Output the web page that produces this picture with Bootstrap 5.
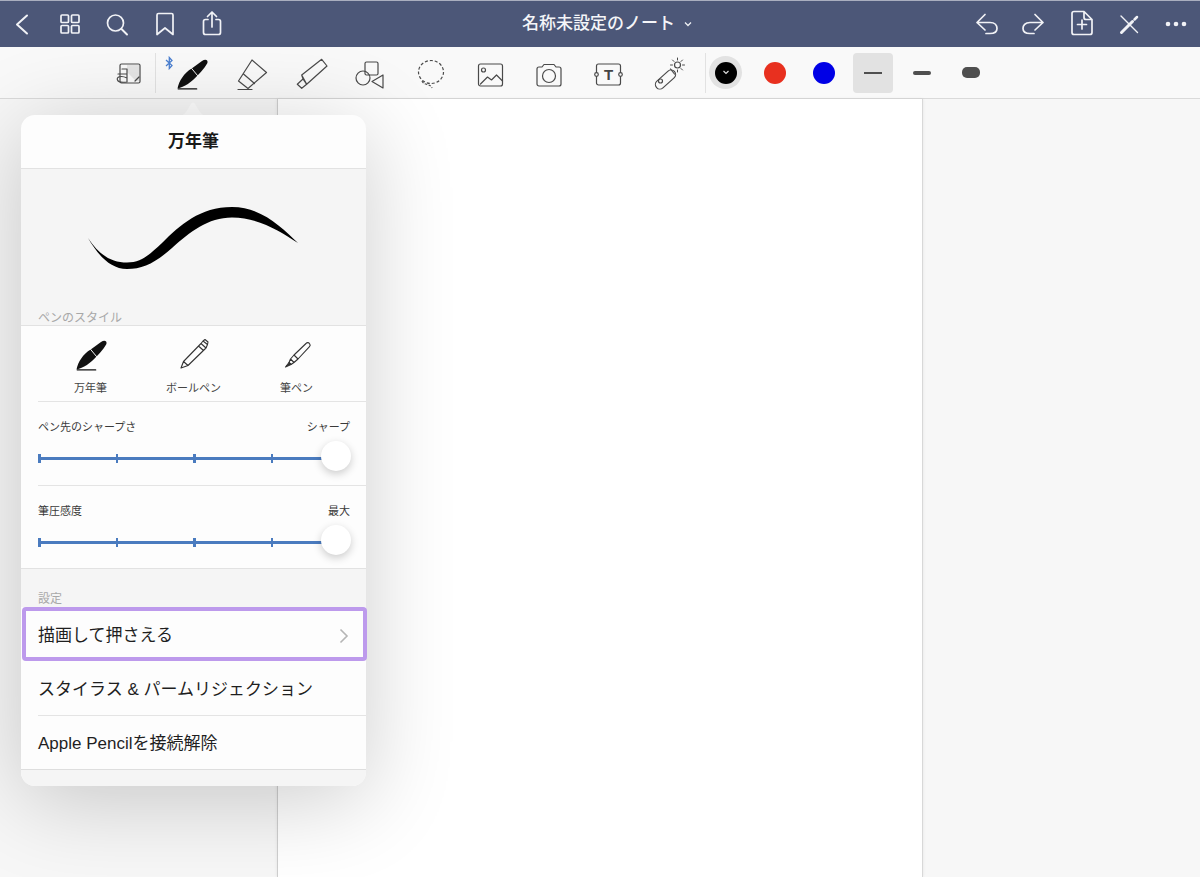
<!DOCTYPE html>
<html lang="ja">
<head>
  <meta charset="UTF-8">
  <meta name="viewport" content="width=device-width, initial-scale=1.0">
  <title>名称未設定のノート</title>
  <link rel="stylesheet" href="https://cdn.jsdelivr.net/npm/bootstrap@5.3.2/dist/css/bootstrap.min.css">
<style>
html, body {
  height: 877px;
  overflow: hidden;
}

body {
  font-family: "Liberation Sans", "Noto Sans CJK JP", sans-serif;
  color: #222;
  background: #f7f7f7;
}

svg {
  display: block;
  flex: none;
}

.topBar {
  height: 47px;
  background: #4c5778;
  border-top: 1px solid #a9aebf;
  color: #f4f5f8;
}

.barSide {
  flex: 1 1 0;
  gap: 15.5px;
}

.barSide.left {
  padding-left: 6px;
}

.barSide.right {
  padding-right: 8px;
}

.barSide svg {
  width: 32px;
  height: 32px;
  fill: none;
  stroke: #f1f2f6;
  stroke-width: 1.7;
  stroke-linecap: round;
  stroke-linejoin: round;
}

.noteTitle {
  font-size: 17px;
  font-weight: 500;
  margin-left: 17px;
  gap: 8px;
  white-space: nowrap;
}

.toolBar {
  height: 52px;
  background: #f9f9f9;
  border-bottom: 1px solid #dadada;
  padding-left: 108px;
}

.toolIcon {
  width: 40px;
  height: 40px;
  fill: none;
  stroke: #4a4a4a;
  stroke-width: 1.2;
  stroke-linecap: round;
  stroke-linejoin: round;
}

.toolCell {
  width: 59.55px;
  flex: none;
}

.toolDivider {
  width: 1px;
  height: 40px;
  background: #e2e2e2;
  flex: none;
  margin-left: 7px;
}

.toolDivider.first {
  margin-right: 6px;
}

.swatchCell {
  width: 40px;
  height: 40px;
  flex: none;
}

.swatch {
  width: 22px;
  height: 22px;
  border-radius: 50%;
}

.swatchHalo {
  width: 33px;
  height: 33px;
  border-radius: 50%;
  background: #e2e2e2;
}

.widthActive {
  background: #e2e2e2;
  border-radius: 4px;
}

.widthBar {
  width: 18px;
  background: #4f4f4f;
}

.workArea {
  height: 778px;
}

.notePage {
  width: 646px;
  background: #fff;
  border-left: 1px solid #cfcfcf;
  border-right: 1px solid #d8d8d8;
  box-shadow: 0 0 3px rgba(0, 0, 0, .08);
}

.popArrow {
  left: 173px;
  top: 2px;
  width: 40px;
  height: 15px;
  fill: #fdfdfd;
}

.popPanel {
  left: 21px;
  top: 16px;
  width: 345px;
  height: 671px;
  background: #fdfdfd;
  border-radius: 14px;
  box-shadow: 0 14px 90px rgba(0, 0, 0, .2);
}

.popHead {
  height: 54px;
  padding-top: 1px;
  border-bottom: 1px solid #e2e2e2;
  font-size: 17px;
  font-weight: 700;
  color: #1a1a1a;
}

.popPreview {
  height: 158px;
  background: #f5f5f5;
  border-bottom: 1px solid #e2e2e2;
}

.sectionLabel {
  font-size: 12px;
  line-height: 14px;
  color: #a8a8a8;
  padding-left: 17px;
  padding-top: 2px;
}

.penRow {
  height: 75px;
  padding-top: 8px;
}

.penChoice {
  width: 103px;
  font-size: 11px;
  line-height: 14px;
  color: #444;
}

.penChoice svg {
  width: 40px;
  height: 40px;
  fill: none;
  stroke: #333;
  stroke-width: 1.1;
  stroke-linecap: round;
  stroke-linejoin: round;
  margin-bottom: 7px;
}

.rowRule {
  height: 1px;
  background: #e4e4e4;
  margin-left: 17px;
}

.sliderBlock {
  height: 83px;
  padding: 17px 16px 0 17px;
  font-size: 11px;
  line-height: 16px;
  color: #3a3a3a;
}

.sliderTrack {
  height: 3px;
  background: #4a7bbf;
  margin-top: 22px;
  margin-right: 15px;
}

.sliderTick {
  width: 2.5px;
  height: 9px;
  margin-top: -3px;
  background: #4a7bbf;
}

.tickSet {
  width: 235px;
}

.sliderThumb {
  right: -16px;
  top: -16px;
  width: 30px;
  height: 30px;
  background: #fff;
  border-radius: 50%;
  box-shadow: 0 3px 8px rgba(0, 0, 0, .2);
}

.settingsGap {
  height: 39px;
  background: #f5f5f5;
  border-top: 1px solid #e2e2e2;
  padding-bottom: 1px;
}

.menuRow {
  height: 54px;
  font-size: 17px;
  color: #1f1f1f;
  background: #fdfdfd;
  border: 0;
  padding: 3px 0 0 17px;
}

.menuRow.picked {
  border: 4px solid #bd9aec;
  border-radius: 4px;
  padding: 3px 14px 0 12px;
  margin-left: 1px;
  margin-right: -1px;
}

.menuRow.lastRow {
  height: 53px;
}

.menuRow svg {
  width: 10px;
  height: 16px;
  fill: none;
  stroke: #b5b5b5;
  stroke-width: 1.6;
}

.popFoot {
  height: 17px;
  background: #f5f5f5;
  border-top: 1px solid #dedede;
  border-radius: 0 0 14px 14px;
}
</style>
</head>
<body>
  <svg width="0" height="0" class="position-absolute">
    <symbol id="fountainPen" viewBox="0 0 40 40">
      <path fill="#111" stroke="none" d="M5.500 35.500C7 28 12 20 19.700 15.500L30 8C33 6 36 6.500 35.500 9.500C35 11.500 31 17 25.500 22.500C20 29 12 34 5.500 35.500Z"/>
      <path stroke="#f5f5f5" stroke-width="1" fill="none" d="M19.700 15.500L25.500 22.500"/>
      <path stroke="#111" stroke-width="1.200" fill="none" d="M6.300 35.900H24.700"/>
    </symbol>
  </svg>

  <!-- title bar -->
  <div class="topBar d-flex align-items-center">
    <div class="barSide left d-flex align-items-center">
      <svg viewBox="0 0 32 32"><path stroke-width="2" d="M21 7.500L11 16.500L21 25.500"/></svg>
      <svg viewBox="0 0 32 32"><rect x="7" y="7" width="7.500" height="7.500" rx="1"/><rect x="17.500" y="7" width="7.500" height="7.500" rx="1"/><rect x="7" y="17.500" width="7.500" height="7.500" rx="1"/><rect x="17.500" y="17.500" width="7.500" height="7.500" rx="1"/></svg>
      <svg viewBox="0 0 32 32"><circle cx="14.500" cy="15" r="8"/><path stroke-width="2" d="M20.500 21L26 26.500"/></svg>
      <svg viewBox="0 0 32 32"><path d="M8 26.500V7A1.500 1.500 0 0 1 9.500 5.500H22.500A1.500 1.500 0 0 1 24 7V26.500L16 20Z"/></svg>
      <svg viewBox="0 0 32 32"><path d="M16 19V4M11.500 8.500L16 4L20.500 8.500M12 11.500H9.500A2 2 0 0 0 7.500 13.500V24.500A2 2 0 0 0 9.500 26.500H22.500A2 2 0 0 0 24.500 24.500V13.500A2 2 0 0 0 22.500 11.500H20"/></svg>
    </div>
    <div class="noteTitle d-flex align-items-center">
      <span>名称未設定のノート</span>
      <svg width="10" height="6" viewBox="0 0 10 6" fill="none" stroke="#eef0f5" stroke-width="1.300"><path d="M2 1.500L5 4.500L8 1.500"/></svg>
    </div>
    <div class="barSide right d-flex align-items-center justify-content-end">
      <svg viewBox="0 0 32 32"><path d="M15 6.500L7 14.500L15 22M7 14.500H20C25 14.500 27 17.500 27 20.500C27 23.500 25 25.500 20 25.500H16"/></svg>
      <svg viewBox="0 0 32 32"><path d="M17 6.500L25 14.500L17 22M25 14.500H12C7 14.500 5 17.500 5 20.500C5 23.500 7 25.500 12 25.500H16"/></svg>
      <svg viewBox="0 0 32 32"><path d="M9 3.500H19L27 11.500V24.500A2 2 0 0 1 25 26.500H9A2 2 0 0 1 7 24.500V5.500A2 2 0 0 1 9 3.500ZM19 3.500V9.500A2 2 0 0 0 21 11.500H27M17 12V21M12.500 16.500H21.500"/></svg>
      <svg viewBox="0 0 32 32"><path stroke-width="1.400" d="M8 8L24.500 24.500"/><path stroke-width="3" d="M8.500 24.500L19.500 13.500"/><path stroke-width="2.500" d="M21.500 11.500L24 9"/></svg>
      <svg viewBox="0 0 32 32"><circle cx="8" cy="16" r="2.300" fill="#f1f2f6" stroke="none"/><circle cx="16" cy="16" r="2.300" fill="#f1f2f6" stroke="none"/><circle cx="24" cy="16" r="2.300" fill="#f1f2f6" stroke="none"/></svg>
    </div>
  </div>

  <!-- tools -->
  <div class="toolBar d-flex align-items-center">
    <svg class="toolIcon" viewBox="0 0 40 40">
      <path fill="#e4e4e4" stroke="none" d="M19 12H31V28H28L19 19Z"/>
      <rect x="12" y="11" width="20" height="19" rx="1.500"/>
      <path d="M14 16H19V29M10 21H19M19 25C13 22 8 24 9.500 27C10.500 30 15 29.500 19 29M27 28L31 24"/>
    </svg>
    <div class="toolDivider first"></div>

    <div class="toolCell position-relative d-flex justify-content-center">
      <svg class="toolIcon"><use href="#fountainPen"/></svg>
      <svg class="position-absolute" style="left:3px;top:3px" width="9" height="14" viewBox="0 0 9 14" fill="none" stroke="#4a7fd0" stroke-width="1.300"><path d="M1 4L7 9.500L4.300 12.500V1.500L7 4.500L1 10"/></svg>
    </div>
    <div class="toolCell d-flex justify-content-center">
      <svg class="toolIcon" viewBox="0 0 40 40"><path d="M21 7L35.500 19.500L17 35.500L7.500 28ZM12.500 21L23.500 30.500M7 36.500H21"/></svg>
    </div>
    <div class="toolCell d-flex justify-content-center">
      <svg class="toolIcon" viewBox="0 0 40 40"><path d="M30.700 6.300L36 13L15.700 31.300L10.700 22ZM10.700 22L12 26L15.700 31.300M12 26L6.300 31.300L10.700 35.300L15.700 31.300"/></svg>
    </div>
    <div class="toolCell d-flex justify-content-center">
      <svg class="toolIcon" viewBox="0 0 40 40"><rect x="15" y="9" width="13" height="13" rx="1.500"/><circle cx="13" cy="25" r="7"/><path d="M22 28.500L33 22V35Z"/></svg>
    </div>
    <div class="toolCell d-flex justify-content-center">
      <svg class="toolIcon" viewBox="0 0 40 40"><ellipse cx="21" cy="19" rx="12.500" ry="11.500" stroke-linecap="butt" stroke-dasharray="3 2"/><path stroke-linecap="butt" stroke-dasharray="2.500 1.500" d="M12 28C14 33 20 30 22 35"/></svg>
    </div>
    <div class="toolCell d-flex justify-content-center">
      <svg class="toolIcon" viewBox="0 0 40 40"><rect x="8.500" y="11" width="24" height="22" rx="2"/><circle cx="13.500" cy="17" r="2"/><path d="M10.500 31L17.500 24L21.500 27L26.500 22L32.500 28"/></svg>
    </div>
    <div class="toolCell d-flex justify-content-center">
      <svg class="toolIcon" viewBox="0 0 40 40"><path d="M10 14H13L15 11.500H25L27 14H30A2 2 0 0 1 32 16V31A2 2 0 0 1 30 33H10A2 2 0 0 1 8 31V16A2 2 0 0 1 10 14Z"/><circle cx="20" cy="23" r="6.500"/></svg>
    </div>
    <div class="toolCell d-flex justify-content-center">
      <svg class="toolIcon" viewBox="0 0 40 40"><rect x="7.500" y="11" width="24" height="21" rx="2"/><circle cx="7.500" cy="21.500" r="1.800" fill="#f9f9f9"/><circle cx="31.500" cy="21.500" r="1.800" fill="#f9f9f9"/><text x="19.500" y="27" text-anchor="middle" font-family="Liberation Sans" font-weight="700" font-size="15" fill="#444" stroke="none">T</text></svg>
    </div>
    <div class="toolCell d-flex justify-content-center">
      <svg class="toolIcon" viewBox="0 0 40 40"><g transform="translate(1.500 0)"><rect x="4" y="22" width="24" height="9" rx="4.500" transform="rotate(-42 16 26.500)"/><circle cx="11" cy="28" r="2"/><path d="M21 16L25 21"/><circle cx="28" cy="12" r="3"/><path stroke-width="1" d="M28 5V7M28 17V19M21 12H23M33 12H35M23 7L24.500 8.500M31.500 15.500L33 17M33 7L31.500 8.500"/></g></svg>
    </div>

    <div class="toolDivider"></div>
    <div class="d-flex align-items-center" style="gap:9px">
      <div class="swatchCell d-flex align-items-center justify-content-center">
        <div class="swatchHalo d-flex align-items-center justify-content-center">
          <div class="swatch bg-black d-flex align-items-center justify-content-center">
            <svg width="8" height="5" viewBox="0 0 8 5" fill="none" stroke="#ddd" stroke-width="1.200"><path d="M1.500 1L4 3.500L6.500 1"/></svg>
          </div>
        </div>
      </div>
      <div class="swatchCell d-flex align-items-center justify-content-center"><div class="swatch" style="background:#e8301f"></div></div>
      <div class="swatchCell d-flex align-items-center justify-content-center"><div class="swatch" style="background:#0000e6"></div></div>
      <div class="swatchCell widthActive d-flex align-items-center justify-content-center"><div class="widthBar" style="height:2px"></div></div>
      <div class="swatchCell d-flex align-items-center justify-content-center"><div class="widthBar rounded-1" style="height:4px"></div></div>
      <div class="swatchCell d-flex align-items-center justify-content-center"><div class="widthBar" style="height:11px;border-radius:5px"></div></div>
    </div>
  </div>

  <!-- page -->
  <div class="workArea position-relative d-flex justify-content-center">
    <div class="notePage"></div>

    <svg class="popArrow position-absolute" viewBox="0 0 40 15"><path d="M6 15C12 15 14 9 18 3C19 1 21 1 22 3C26 9 28 15 34 15Z"/></svg>

    <div class="popPanel position-absolute d-flex flex-column">
      <div class="popHead d-flex align-items-center justify-content-center">万年筆</div>

      <div class="popPreview d-flex flex-column">
        <svg width="345" height="140" viewBox="21 169 345 140">
          <path fill="#000" d="M88 238C100 256 112 262.500 127 262.500C142 262.500 150 254 162 243C180 225 200 207 232 207C262 207 282 228 298 243C280 231 258 217.500 232 217.500C208 217.500 190 232 172 248C155 263 143 269 127 269C110 269 98 255 88 238Z"/>
        </svg>
        <div class="sectionLabel">ペンのスタイル</div>
      </div>

      <div class="penRow d-flex justify-content-center">
        <div class="penChoice d-flex flex-column align-items-center">
          <svg><use href="#fountainPen"/></svg>
          <span>万年筆</span>
        </div>
        <div class="penChoice d-flex flex-column align-items-center">
          <svg viewBox="0 0 40 40"><path d="M7 34L9.500 27.500L27 9.500L32 14L14 31.500ZM9.500 27.500L14 31.500M27 9.500L29 7L31 5.500L34 8L33.500 10.500L32 14M29 7L33.500 10.500M24.500 12L29.500 16.500"/></svg>
          <span>ボールペン</span>
        </div>
        <div class="penChoice d-flex flex-column align-items-center">
          <svg viewBox="0 0 40 40"><path d="M17 21L29 9.500A2.200 2.200 0 0 1 32.500 9.500A2.200 2.200 0 0 1 32.500 12.500L21 25ZM17 21L13.500 25L17 28.500L21 25M13.500 25L12 28.500L14 30.500L17 28.500"/><path fill="#333" d="M12 28.500L8.500 33L14 30.500Z"/></svg>
          <span>筆ペン</span>
        </div>
      </div>
      <div class="rowRule"></div>

      <div class="sliderBlock">
        <div class="d-flex justify-content-between"><span>ペン先のシャープさ</span><span>シャープ</span></div>
        <div class="sliderTrack position-relative">
          <div class="tickSet d-flex justify-content-between">
            <div class="sliderTick"></div><div class="sliderTick"></div><div class="sliderTick"></div><div class="sliderTick"></div>
          </div>
          <div class="sliderThumb position-absolute"></div>
        </div>
      </div>
      <div class="rowRule"></div>

      <div class="sliderBlock">
        <div class="d-flex justify-content-between"><span>筆圧感度</span><span>最大</span></div>
        <div class="sliderTrack position-relative">
          <div class="tickSet d-flex justify-content-between">
            <div class="sliderTick"></div><div class="sliderTick"></div><div class="sliderTick"></div><div class="sliderTick"></div>
          </div>
          <div class="sliderThumb position-absolute"></div>
        </div>
      </div>

      <div class="settingsGap d-flex align-items-end">
        <div class="sectionLabel">設定</div>
      </div>

      <div class="list-group list-group-flush">
        <div class="list-group-item menuRow picked d-flex align-items-center justify-content-between">
          <span>描画して押さえる</span>
          <svg viewBox="0 0 10 16"><path d="M1.500 1.500L8 8L1.500 14.500"/></svg>
        </div>
        <div class="list-group-item menuRow d-flex align-items-center">スタイラス &amp; パームリジェクション</div>
        <div class="rowRule"></div>
        <div class="list-group-item menuRow lastRow d-flex align-items-center">Apple Pencilを接続解除</div>
      </div>
      <div class="popFoot"></div>
    </div>
  </div>

  <script src="https://cdn.jsdelivr.net/npm/bootstrap@5.3.2/dist/js/bootstrap.bundle.min.js"></script>
</body>
</html>
